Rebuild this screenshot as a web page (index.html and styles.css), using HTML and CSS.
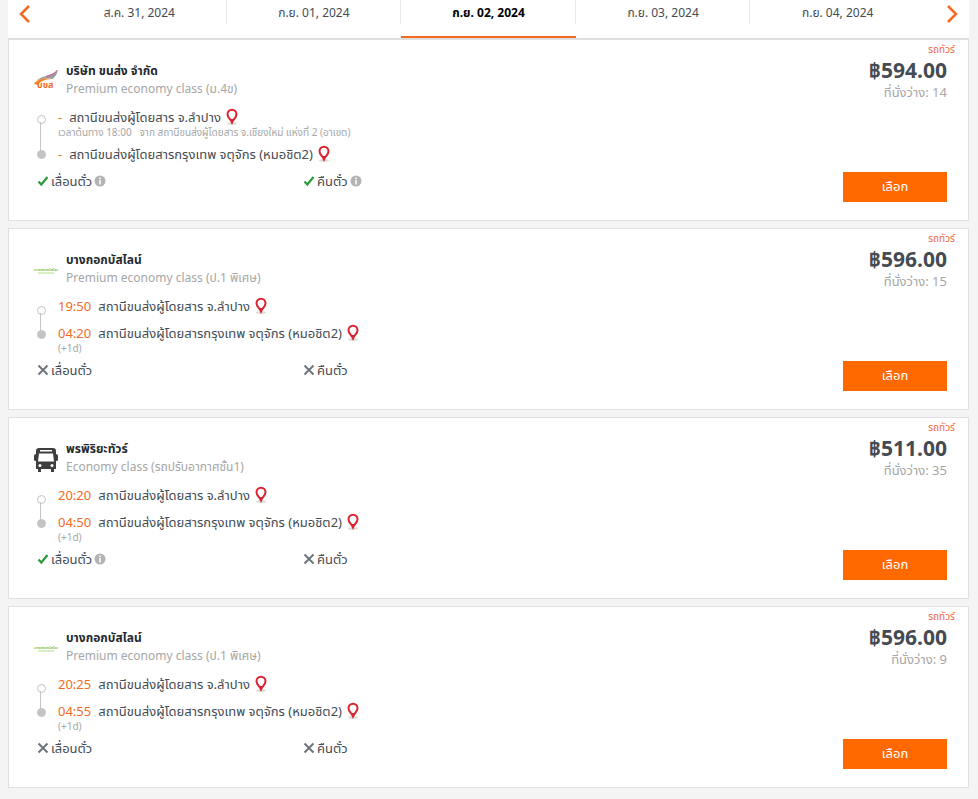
FILE: index.html
```
<!DOCTYPE html>
<html lang="th">
  <head>
    <meta charset="UTF-8" />
    <meta name="viewport" content="width=device-width, initial-scale=1.0" />
    <title>ตั๋วรถทัวร์</title>
    <link rel="stylesheet" href="styles.css">
  </head>
  <body>
    <svg class="sprite" aria-hidden="true">
      <symbol id="pin" viewBox="0 0 14 18">
        <ellipse cx="7" cy="15.500" rx="5" ry="1.300" fill="#d9dcd6" />
        <path d="M7 14.500C5.500 11 2.500 9.500 2.500 6.200a4.500 4.500 0 0 1 9 0C11.500 9.500 8.500 11 7 14.500z" fill="#fff" stroke="#dc2430" stroke-width="2" />
        <path d="M5 11h4l-2 4z" fill="#dc2430" />
      </symbol>
      <symbol id="check" viewBox="0 0 12 12">
        <path d="M1.500 6.500l2.800 3L10.500 2" fill="none" stroke="#2b9b40" stroke-width="2.200" />
      </symbol>
      <symbol id="cross" viewBox="0 0 12 12">
        <path d="M1.500 1.500l9 9M10.500 1.500l-9 9" fill="none" stroke="#6d757c" stroke-width="2" />
      </symbol>
      <symbol id="info" viewBox="0 0 12 12">
        <circle cx="6" cy="6" r="5.500" fill="#b3b3b3" />
        <path d="M6 5v4.500M6 2.500v1.500" fill="none" stroke="#fff" stroke-width="1.600" />
      </symbol>
      <symbol id="line-logo" viewBox="0 0 24 24">
        <text x="0" y="12" font-size="4" font-weight="bold" fill="#8cc63f">บางกอกบัสไลน์</text>
        <path d="M4 14h16" stroke="#b6dc8c" stroke-width="1" />
      </symbol>
    </svg>

    <nav class="days">
      <button class="arrow" aria-label="ก่อนหน้า">
        <svg width="12" height="18" viewBox="0 0 12 18"><path d="M10 1L2 9l8 8" fill="none" stroke="#f36b21" stroke-width="2.500" /></svg>
      </button>
      <button class="day">ส.ค. 31, 2024</button>
      <button class="day">ก.ย. 01, 2024</button>
      <button class="day active">ก.ย. 02, 2024</button>
      <button class="day">ก.ย. 03, 2024</button>
      <button class="day">ก.ย. 04, 2024</button>
      <button class="arrow" aria-label="ถัดไป">
        <svg width="12" height="18" viewBox="0 0 12 18"><path d="M2 1l8 8-8 8" fill="none" stroke="#f36b21" stroke-width="2.500" /></svg>
      </button>
    </nav>

    <main class="trips">
      <article class="trip">
        <div class="info">
          <div class="operator">
            <svg class="logo" viewBox="0 0 24 24">
              <path d="M2 11C6 7 10 7 14 5.500 18 4 21 3 23.500 0c0 4-2 6.500-5 9-4-.5-10-1-16.500 2z" fill="#9b9ba3" />
              <path d="M12 6.500c5-1.500 9-3 11.500-6.500" fill="none" stroke="#d8558c" stroke-width="1" />
              <path d="M0 14c4-6 12-6 20-5-7 0-13 1-16 6z" fill="#f58220" />
              <text x="3" y="18" font-size="9" font-weight="bold" fill="#f26a1b">บขส</text>
            </svg>
            <div>
              <h2>บริษัท ขนส่ง จำกัด</h2>
              <p>Premium economy class (ม.4ข)</p>
            </div>
          </div>
          <div class="route">
            <div class="track"></div>
            <div class="stops">
              <div class="stop"><span class="time">-</span>สถานีขนส่งผู้โดยสาร จ.ลำปาง<svg class="pin"><use href="#pin" /></svg></div>
              <p class="note origin">เวลาต้นทาง 18:00 &nbsp; จาก สถานีขนส่งผู้โดยสาร จ.เชียงใหม่ แห่งที่ 2 (อาเขต)</p>
              <div class="stop"><span class="time">-</span>สถานีขนส่งผู้โดยสารกรุงเทพ จตุจักร (หมอชิต2)<svg class="pin"><use href="#pin" /></svg></div>
            </div>
          </div>
          <div class="options">
            <span class="option"><svg class="mark"><use href="#check" /></svg>เลื่อนตั๋ว<svg class="hint"><use href="#info" /></svg></span>
            <span class="option"><svg class="mark"><use href="#check" /></svg>คืนตั๋ว<svg class="hint"><use href="#info" /></svg></span>
          </div>
        </div>
        <div class="booking">
          <span class="type">รถทัวร์</span>
          <strong class="price">฿594.00</strong>
          <span class="seats">ที่นั่งว่าง: 14</span>
          <button class="select">เลือก</button>
        </div>
      </article>

      <article class="trip overnight">
        <div class="info">
          <div class="operator">
            <svg class="logo"><use href="#line-logo" /></svg>
            <div>
              <h2>บางกอกบัสไลน์</h2>
              <p>Premium economy class (ป.1 พิเศษ)</p>
            </div>
          </div>
          <div class="route">
            <div class="track"></div>
            <div class="stops">
              <div class="stop"><span class="time">19:50</span>สถานีขนส่งผู้โดยสาร จ.ลำปาง<svg class="pin"><use href="#pin" /></svg></div>
              <div class="stop"><span class="time">04:20</span>สถานีขนส่งผู้โดยสารกรุงเทพ จตุจักร (หมอชิต2)<svg class="pin"><use href="#pin" /></svg></div>
              <p class="note">(+1d)</p>
            </div>
          </div>
          <div class="options">
            <span class="option"><svg class="mark"><use href="#cross" /></svg>เลื่อนตั๋ว</span>
            <span class="option"><svg class="mark"><use href="#cross" /></svg>คืนตั๋ว</span>
          </div>
        </div>
        <div class="booking">
          <span class="type">รถทัวร์</span>
          <strong class="price">฿596.00</strong>
          <span class="seats">ที่นั่งว่าง: 15</span>
          <button class="select">เลือก</button>
        </div>
      </article>

      <article class="trip overnight">
        <div class="info">
          <div class="operator">
            <svg class="logo" viewBox="0 0 24 24">
              <path d="M5 0h14q3 0 3 3v3q2 0 2 2v4q0 1-2 1v8h-2v3h-3v-3H7v3H4v-3H2v-8q-2 0-2-1V8q0-2 2-2V3q0-3 3-3z" fill="#3f3f41" />
              <path d="M6 2h12v1.500H6zM5 5.500h14l1 8H4z" fill="#fff" />
              <circle cx="6" cy="17.500" r="1.500" fill="#fff" />
              <circle cx="18" cy="17.500" r="1.500" fill="#fff" />
            </svg>
            <div>
              <h2>พรพิริยะทัวร์</h2>
              <p>Economy class (รถปรับอากาศชั้น1)</p>
            </div>
          </div>
          <div class="route">
            <div class="track"></div>
            <div class="stops">
              <div class="stop"><span class="time">20:20</span>สถานีขนส่งผู้โดยสาร จ.ลำปาง<svg class="pin"><use href="#pin" /></svg></div>
              <div class="stop"><span class="time">04:50</span>สถานีขนส่งผู้โดยสารกรุงเทพ จตุจักร (หมอชิต2)<svg class="pin"><use href="#pin" /></svg></div>
              <p class="note">(+1d)</p>
            </div>
          </div>
          <div class="options">
            <span class="option"><svg class="mark"><use href="#check" /></svg>เลื่อนตั๋ว<svg class="hint"><use href="#info" /></svg></span>
            <span class="option"><svg class="mark"><use href="#cross" /></svg>คืนตั๋ว</span>
          </div>
        </div>
        <div class="booking">
          <span class="type">รถทัวร์</span>
          <strong class="price">฿511.00</strong>
          <span class="seats">ที่นั่งว่าง: 35</span>
          <button class="select">เลือก</button>
        </div>
      </article>

      <article class="trip overnight">
        <div class="info">
          <div class="operator">
            <svg class="logo"><use href="#line-logo" /></svg>
            <div>
              <h2>บางกอกบัสไลน์</h2>
              <p>Premium economy class (ป.1 พิเศษ)</p>
            </div>
          </div>
          <div class="route">
            <div class="track"></div>
            <div class="stops">
              <div class="stop"><span class="time">20:25</span>สถานีขนส่งผู้โดยสาร จ.ลำปาง<svg class="pin"><use href="#pin" /></svg></div>
              <div class="stop"><span class="time">04:55</span>สถานีขนส่งผู้โดยสารกรุงเทพ จตุจักร (หมอชิต2)<svg class="pin"><use href="#pin" /></svg></div>
              <p class="note">(+1d)</p>
            </div>
          </div>
          <div class="options">
            <span class="option"><svg class="mark"><use href="#cross" /></svg>เลื่อนตั๋ว</span>
            <span class="option"><svg class="mark"><use href="#cross" /></svg>คืนตั๋ว</span>
          </div>
        </div>
        <div class="booking">
          <span class="type">รถทัวร์</span>
          <strong class="price">฿596.00</strong>
          <span class="seats">ที่นั่งว่าง: 9</span>
          <button class="select">เลือก</button>
        </div>
      </article>
    </main>
  </body>
</html>
```
FILE: styles.css
```
* {
  box-sizing: border-box;
  margin: 0;
  padding: 0;
}

body {
  background: #f4f4f4;
  color: #444b52;
  font-family: "Noto Sans", "Noto Sans Thai", sans-serif;
  font-size: 13px;
  padding: 0 9px 10px 8px;
}

button {
  border: none;
  background: none;
  font: inherit;
  color: inherit;
  cursor: pointer;
}

.sprite {
  display: none;
}

/* date bar */
.days {
  display: flex;
  align-items: flex-start;
  background: #fff;
  border-bottom: 1px solid #dedede;
}

.arrow {
  width: 44px;
  height: 28px;
  padding: 5px 11px;
  text-align: left;
}

.arrow svg {
  display: block;
}

.arrow:last-child svg {
  margin-left: auto;
}

.day {
  flex: 1;
  height: 38px;
  padding-bottom: 12px;
  background: linear-gradient(#ebebeb, #ebebeb) right top / 1px 24px no-repeat;
  font-size: 12px;
}

.day:nth-last-child(2) {
  background: none;
}

.day.active {
  padding-bottom: 10px;
  border-bottom: 2px solid #f36b21;
  color: #000;
  font-weight: bold;
}

/* trip cards */
.trips {
  display: grid;
  gap: 7px;
}

.trip {
  display: flex;
  justify-content: space-between;
  background: #fff;
  border: 1px solid #e0e0e0;
}

.info {
  flex: 1;
  padding: 22px 0 29px 25px;
}

.operator {
  display: flex;
  align-items: center;
  gap: 8px;
}

.logo {
  width: 24px;
  height: 24px;
  margin-top: 4px;
  overflow: visible;
}

.operator h2 {
  color: #24292e;
  font-size: 12px;
  line-height: 18px;
}

.operator p {
  color: #a6a6a6;
  font-size: 12px;
  line-height: 17px;
}

.route {
  display: flex;
  min-height: 64px;
  margin-top: 10px;
  align-items: flex-start;
}

.track {
  position: relative;
  width: 1px;
  height: 31px;
  margin: 15px 17px 0 6px;
  background: #c4c4c4;
}

.overnight .track {
  height: 20px;
  margin-top: 17px;
}

.track::before,
.track::after {
  content: "";
  position: absolute;
  left: -3px;
  width: 7px;
  height: 7px;
  border: 1px solid #c4c4c4;
  border-radius: 50%;
}

.track::before {
  top: -7px;
}

.track::after {
  bottom: -6px;
  background: #c4c4c4;
}

.stop {
  display: flex;
  align-items: center;
  line-height: 20px;
}

.time {
  margin-right: 7px;
  color: #f36b21;
}

.pin {
  width: 14px;
  height: 18px;
  margin-left: 4px;
}

.overnight .stop + .stop {
  margin-top: 7px;
}

.note {
  color: #a6a6a6;
  font-size: 10px;
  line-height: 10px;
}

.origin {
  margin-bottom: 7px;
}

.options {
  display: grid;
  grid-template-columns: 266px auto;
  justify-content: start;
  padding-left: 3px;
  line-height: 20px;
}

.option {
  display: flex;
  align-items: center;
  gap: 2px;
}

.mark,
.hint {
  width: 12px;
  height: 12px;
}

.booking {
  display: flex;
  flex-direction: column;
  align-items: flex-end;
  padding: 1px 21px 18px 0;
}

.type {
  margin-right: -8px;
  color: #f4623a;
  font-size: 10px;
  line-height: 16px;
}

.price {
  font-size: 21px;
  line-height: 26px;
}

.seats {
  color: #a6a6a6;
  line-height: 18px;
}

.select {
  width: 104px;
  height: 30px;
  margin-top: auto;
  background: #ff6900;
  color: #fff;
}
```
